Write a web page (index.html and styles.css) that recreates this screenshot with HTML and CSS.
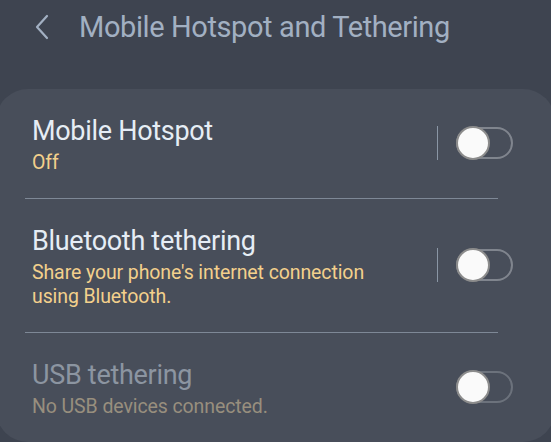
FILE: index.html
```html
<!DOCTYPE html>
<html lang="en">
<head>
  <meta charset="UTF-8">
  <meta name="viewport" content="width=device-width, initial-scale=1.0">
  <title>Mobile Hotspot and Tethering</title>
  <link rel="stylesheet" href="styles.css">
</head>
<body>
  <header class="top-bar">
    <svg class="back" width="16" height="26" viewBox="0 0 16 26">
      <polyline points="13,2 3,13 13,24" fill="none" stroke="#a2b0c2" stroke-width="2.2" stroke-linecap="round" stroke-linejoin="round"/>
    </svg>
    <h1>Mobile Hotspot and Tethering</h1>
  </header>

  <div class="card">
    <div class="row">
      <div class="text">
        <div class="title">Mobile Hotspot</div>
        <div class="sub">Off</div>
      </div>
      <div class="control">
        <span class="sep"></span>
        <span class="switch"><span class="thumb"></span></span>
      </div>
    </div>
    <div class="divider"></div>

    <div class="row">
      <div class="text">
        <div class="title">Bluetooth tethering</div>
        <div class="sub">Share your phone's internet connection<br>using Bluetooth.</div>
      </div>
      <div class="control">
        <span class="sep"></span>
        <span class="switch"><span class="thumb"></span></span>
      </div>
    </div>
    <div class="divider"></div>

    <div class="row disabled">
      <div class="text">
        <div class="title">USB tethering</div>
        <div class="sub">No USB devices connected.</div>
      </div>
      <div class="control">
        <span class="switch"><span class="thumb"></span></span>
      </div>
    </div>
  </div>
</body>
</html>
```

FILE: styles.css
```css
body {
  margin: 0;
  background-color: #3e4450;
  font-family: Roboto, "Noto Sans", Arial, sans-serif;
  overflow: hidden;
}

.top-bar {
  height: 54px;
  display: flex;
  align-items: center;
  padding-left: 34px;
}

.back {
  display: block;
  margin-right: 29px;
}

h1 {
  margin: 0;
  font-size: 29px;
  letter-spacing: -0.4px;
  font-weight: 400;
  color: #a2b0c2;
}

.card {
  margin-top: 35px;
  margin-left: -4px;
  width: calc(100% + 8px);
  background-color: #484e5a;
  border-radius: 32px;
}

.row {
  display: flex;
  align-items: center;
  padding: 25px 42px 23px 36px;
}

.text {
  flex: 1;
}

.title {
  font-size: 27px;
  letter-spacing: -0.3px;
  line-height: 34px;
  color: #e6edf5;
}

.sub {
  margin-top: 3px;
  font-size: 19.5px;
  letter-spacing: -0.1px;
  line-height: 24px;
  color: #f3d08c;
}

.disabled .title {
  color: #8c95a1;
}

.disabled .sub {
  color: #988f7e;
}

.control {
  display: flex;
  align-items: center;
  margin-bottom: 4px;
}

.sep {
  width: 1px;
  height: 34px;
  background-color: #8a96a5;
  margin-right: 18px;
}

.switch {
  position: relative;
  width: 53px;
  height: 28px;
  border: 2px solid #80858e;
  border-radius: 16px;
}

.thumb {
  position: absolute;
  left: -2px;
  top: -3px;
  width: 30px;
  height: 30px;
  border: 2px solid #8c8c8c;
  border-radius: 50%;
  background-color: #fafafa;
}

.disabled .switch {
  border-color: #6c727c;
}

.divider {
  height: 1px;
  background-color: #7e8896;
  margin: 0 57px 0 29px;
}
```
